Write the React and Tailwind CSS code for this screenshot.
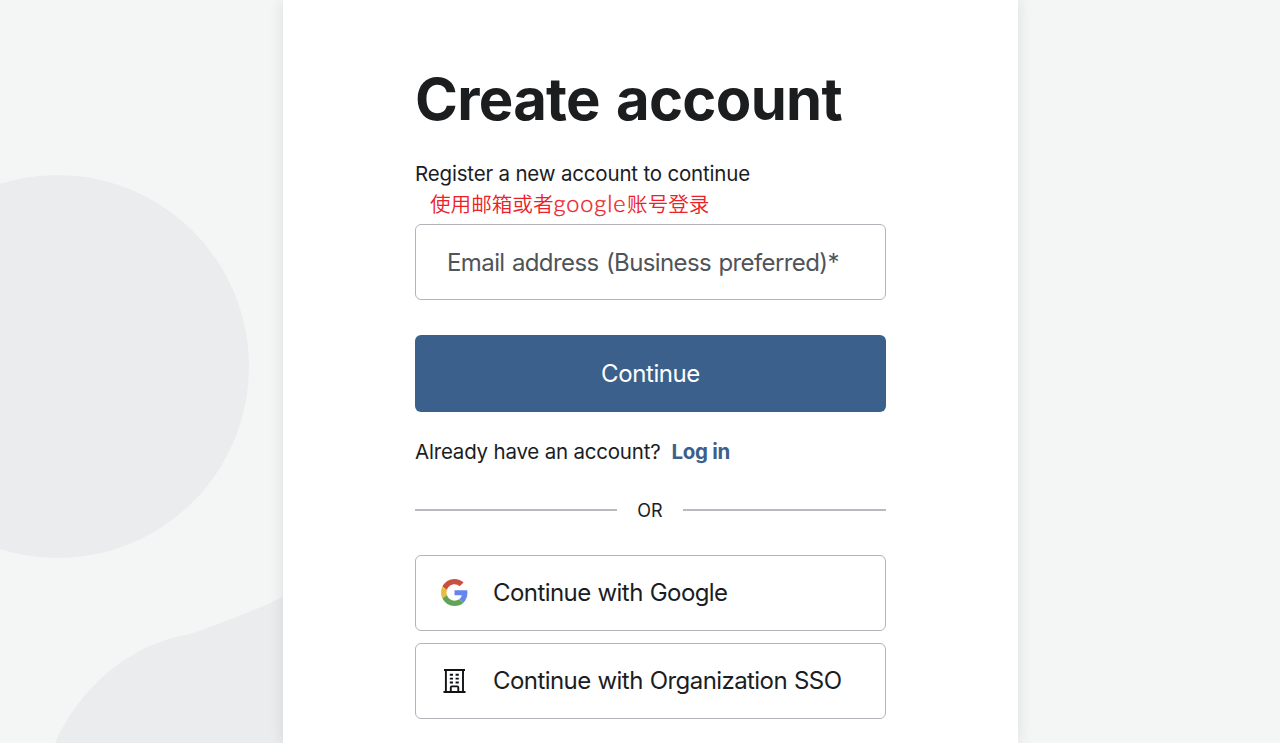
import React from 'react';

function Shapes() {
  return (
    <svg className="absolute left-0 top-0" width="283" height="743" viewBox="0 0 283 743" fill="#ebecee" aria-hidden="true">
      <circle cx="57.5" cy="366.5" r="191.5" />
      <path d="M55 743 C79 689 124 651 174 637.500 C181 635.500 188 635 195 632.500 C228 620.500 257 609.500 283 597 V743 Z" />
    </svg>
  );
}

function GoogleIcon() {
  return (
    <svg className="mb-[2px] h-[27px] w-[27px]" viewBox="0 0 48 48" aria-hidden="true">
      <path fill="#c9503e" d="M24 9.500c3.540 0 6.710 1.220 9.210 3.600l6.850-6.850C35.900 2.380 30.470 0 24 0 14.620 0 6.510 5.380 2.560 13.220l7.980 6.190C12.430 13.720 17.740 9.500 24 9.500z" />
      <path fill="#6486ee" d="M46.980 24.550c0-1.570-.15-3.090-.38-4.550H24v9.020h12.940c-.58 2.960-2.260 5.480-4.780 7.180l7.730 6c4.510-4.180 7.090-10.360 7.090-17.650z" />
      <path fill="#e7bd42" d="M10.530 28.590c-.48-1.450-.76-2.990-.76-4.590s.27-3.140.76-4.590l-7.980-6.190C.92 16.460 0 20.120 0 24c0 3.880.92 7.540 2.560 10.780l7.970-6.190z" />
      <path fill="#62a457" d="M24 48c6.480 0 11.930-2.130 15.890-5.810l-7.730-6c-2.150 1.450-4.920 2.300-8.160 2.300-6.260 0-11.570-4.220-13.470-9.910l-7.980 6.190C6.510 42.620 14.620 48 24 48z" />
    </svg>
  );
}

function BuildingIcon() {
  return (
    <svg className="mb-[2px] h-[27px] w-[27px]" viewBox="0 0 27 27" fill="none" stroke="#101214" strokeWidth="1.9" aria-hidden="true">
      <path d="M3 3H24M2.500 25H24.500M4.900 3V25M22 3V25" />
      <path d="M9.800 25V20.500Q9.800 19.400 10.900 19.400H16.200Q17.300 19.400 17.300 20.500V25" />
      <path d="M8.800 7.700H12M14.600 7.700H17.800M8.800 11.600H12M14.600 11.600H17.800M8.800 15.500H12M14.600 15.500H17.800" />
    </svg>
  );
}

function ProviderButton({ icon, children }) {
  return (
    <button className="flex h-[76px] w-full items-center gap-[25px] rounded-[6px] border-[1.5px] border-[#b3b4ba] pl-[25px] text-2xl tracking-[-0.57px] [word-spacing:0.8px] whitespace-nowrap">
      {icon}
      {children}
    </button>
  );
}

export default function App() {
  return (
    <div className="relative flex h-[743px] w-full justify-center overflow-hidden bg-[#f4f6f6] pl-[21px] font-['Inter',sans-serif] text-[#1b1d1f]">
      <Shapes />
      <main className="relative flex h-full w-[735px] flex-col bg-white px-[132px] pt-[63px] shadow-[0_0_14px_rgba(30,35,40,0.11)]">
        <h1 className="h-[72px] text-[58px] leading-[72px] font-bold tracking-[-0.7px] [word-spacing:3px] whitespace-nowrap">Create account</h1>
        <p className="mt-[24px] h-[30px] text-[20.5px] leading-[30px] tracking-[-0.18px] whitespace-nowrap">Register a new account to continue</p>
        <p className="mt-[-1px] ml-[15px] flex h-[29px] items-center text-[20.6px] leading-[28px] font-[350] whitespace-nowrap text-[#ed2027] font-['Noto_Sans_CJK_SC',sans-serif]">
          <span>使用邮箱或者</span><span className="w-[73.5px] font-['Lato'] text-[23.5px] font-light tracking-[0.9px] [-webkit-text-stroke:0.35px_#ed2027]">google</span><span>账号登录</span>
        </p>
        <div className="mt-[7px] flex h-[76px] shrink-0 items-center rounded-[6px] border-[1.5px] border-[#b3b4ba] pl-[31px] pt-[1px] text-2xl tracking-[-0.6px] [word-spacing:1.2px] whitespace-nowrap text-[#505358]">
          Email address (Business preferred)*
        </div>
        <button className="mt-[35px] h-[77px] shrink-0 rounded-[6px] bg-[#3c608c] pt-[1px] text-2xl tracking-[-0.4px] text-white">Continue</button>
        <p className="mt-[25px] flex h-[30px] gap-[11px] text-[20.5px] leading-[30px] tracking-[-0.2px] whitespace-nowrap">
          <span>Already have an account?</span>
          <a className="font-bold tracking-[-0.3px] text-[#3c608c]">Log in</a>
        </p>
        <div className="mt-[28px] flex h-[30px] items-center text-[18px]">
          <span className="h-[1.5px] w-[202px] bg-[#b9bac0]" />
          <span className="flex-1 text-center">OR</span>
          <span className="h-[1.5px] w-[203px] bg-[#b9bac0]" />
        </div>
        <div className="mt-[30px] flex flex-col gap-3">
          <ProviderButton icon={<GoogleIcon />}>Continue with Google</ProviderButton>
          <ProviderButton icon={<BuildingIcon />}>Continue with Organization SSO</ProviderButton>
        </div>
      </main>
    </div>
  );
}
